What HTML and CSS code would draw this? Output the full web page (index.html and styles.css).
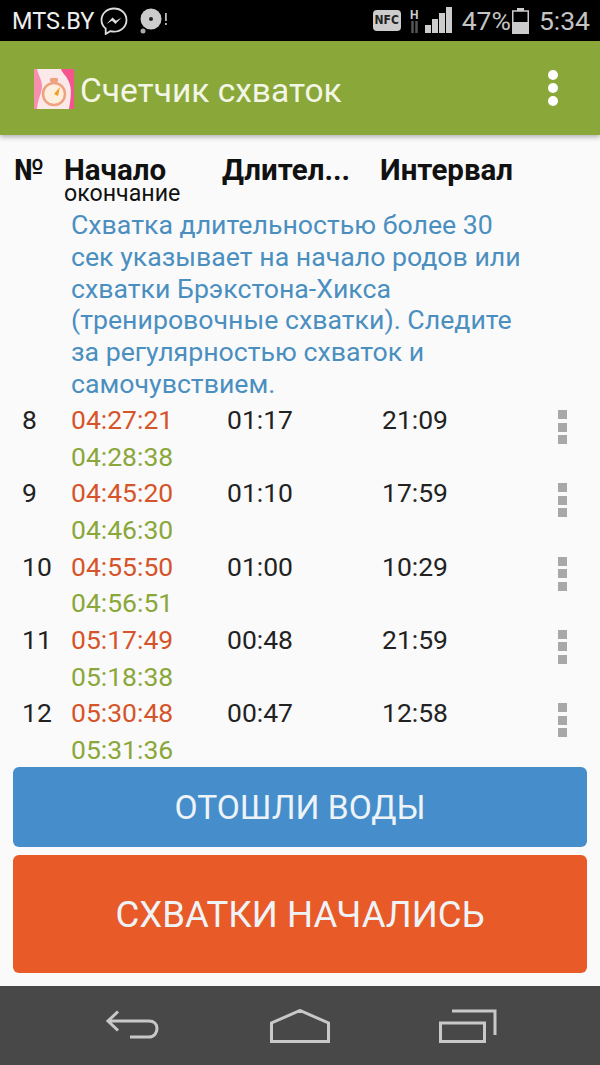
FILE: index.html
```html
<!DOCTYPE html>
<html lang="ru">

<head>
    <meta charset="UTF-8">
    <meta name="viewport" content="width=device-width, initial-scale=1.0">
    <title>Счетчик схваток</title>
    <link rel="stylesheet" href="styles.css">
</head>

<body>
    <div class="statusbar">
        <span class="carrier">MTS.BY</span>
        <svg class="ic-msg" width="28" height="28" viewBox="0 0 28 28">
            <path d="M14 1.500C7 1.500 1.500 6.500 1.500 13c0 3.500 1.600 6.500 4.200 8.600V27l4.500-2.800c1.200.3 2.500.5 3.800.5 7 0 12.500-5 12.500-11.700S21 1.500 14 1.500z" fill="none" stroke="#ddd" stroke-width="1.800" />
            <path d="M6.500 17l6-6.500 3.500 3.300 5.500-3.300-6 6.500-3.500-3.300z" fill="#ddd" />
        </svg>
        <svg class="ic-disc" width="28" height="28" viewBox="0 0 28 28">
            <circle cx="11" cy="12" r="10.500" fill="#ccc" />
            <circle cx="11" cy="12" r="2" fill="#222" />
            <circle cx="3" cy="24" r="2.500" fill="#aaa" />
            <rect x="25" y="6" width="1.800" height="8" fill="#bbb" />
            <rect x="25" y="16" width="1.800" height="2" fill="#bbb" />
        </svg>
        <span class="status-right">
            <span class="nfc">NFC</span>
            <span class="net">
                <span class="net-h">H</span>
                <svg width="9" height="12" viewBox="0 0 9 12">
                    <path d="M2.500 0v12M6.500 0v12" stroke="#555" stroke-width="2.500" />
                </svg>
            </span>
            <svg class="ic-signal" width="27" height="27" viewBox="0 0 27 27">
                <rect x="0" y="18" width="6" height="8" fill="#ccc" />
                <rect x="7" y="12" width="6" height="14" fill="#ccc" />
                <rect x="14" y="6" width="6" height="20" fill="#ccc" />
                <rect x="21" y="0" width="6" height="26" fill="#ccc" />
            </svg>
            <span class="battery-text">47%</span>
            <svg class="ic-battery" width="17" height="26" viewBox="0 0 17 26">
                <rect x="5" y="0" width="7" height="3" fill="#ccc" />
                <rect x=".75" y="3" width="15.500" height="22" fill="none" stroke="#ccc" stroke-width="1.500" />
                <rect x="0" y="14" width="17" height="12" fill="#ccc" />
            </svg>
            <span class="clock">5:34</span>
        </span>
    </div>

    <div class="actionbar">
        <svg class="app-icon" width="40" height="40" viewBox="0 0 40 40">
            <rect width="40" height="40" fill="#fbe9ea" />
            <path d="M0 0h3c1 6 5 10 5 17s-4 12-5 23H0z" fill="#f78fae" />
            <path d="M40 0H27c1 4 5 6 8 13s2 15 0 27h5z" fill="#f5558c" />
            <circle cx="20" cy="25" r="11" fill="#fdeede" stroke="#eea27f" stroke-width="2.500" />
            <rect x="16" y="9" width="8" height="4" rx="1" fill="#eea27f" />
            <path d="M20 25l6-7-2 9z" fill="#f0a020" />
        </svg>
        <span class="app-title">Счетчик схваток</span>
        <span class="overflow">
            <i></i><i></i><i></i>
        </span>
    </div>

    <div class="content">
        <div class="table-head row-grid">
            <div class="th th-num">№</div>
            <div class="th-start">
                <div class="th">Начало</div>
                <div class="th-sub">окончание</div>
            </div>
            <div class="th th-dur">Длител...</div>
            <div class="th th-int">Интервал</div>
        </div>

        <p class="note">Схватка длительностью более 30 сек указывает на начало родов или схватки Брэкстона-Хикса (тренировочные схватки). Следите за регулярностью схваток и самочувствием.</p>

        <div class="rows">
            <div class="row row-grid">
                <div class="num">8</div>
                <div class="times"><div class="t-start">04:27:21</div><div class="t-end">04:28:38</div></div>
                <div class="dur">01:17</div>
                <div class="int">21:09</div>
                <div class="dots"><i></i><i></i><i></i></div>
            </div>
            <div class="row row-grid">
                <div class="num">9</div>
                <div class="times"><div class="t-start">04:45:20</div><div class="t-end">04:46:30</div></div>
                <div class="dur">01:10</div>
                <div class="int">17:59</div>
                <div class="dots"><i></i><i></i><i></i></div>
            </div>
            <div class="row row-grid">
                <div class="num">10</div>
                <div class="times"><div class="t-start">04:55:50</div><div class="t-end">04:56:51</div></div>
                <div class="dur">01:00</div>
                <div class="int">10:29</div>
                <div class="dots"><i></i><i></i><i></i></div>
            </div>
            <div class="row row-grid">
                <div class="num">11</div>
                <div class="times"><div class="t-start">05:17:49</div><div class="t-end">05:18:38</div></div>
                <div class="dur">00:48</div>
                <div class="int">21:59</div>
                <div class="dots"><i></i><i></i><i></i></div>
            </div>
            <div class="row row-grid">
                <div class="num">12</div>
                <div class="times"><div class="t-start">05:30:48</div><div class="t-end">05:31:36</div></div>
                <div class="dur">00:47</div>
                <div class="int">12:58</div>
                <div class="dots"><i></i><i></i><i></i></div>
            </div>
        </div>

        <div class="buttons">
            <button class="btn btn-water">ОТОШЛИ ВОДЫ</button>
            <button class="btn btn-start">СХВАТКИ НАЧАЛИСЬ</button>
        </div>
    </div>

    <div class="navbar">
        <svg width="56" height="32" viewBox="0 0 56 32">
            <path d="M13 1.500L3 11l10 9.500M3 11h41c5 0 8 3 8 7.500S49 27 44 27H25" fill="none" stroke="#c8c8c8" stroke-width="3" />
        </svg>
        <svg width="60" height="34" viewBox="0 0 60 34">
            <path d="M1.500 32.500V14L30 1.500 58.500 14v18.500z" fill="none" stroke="#c8c8c8" stroke-width="3" />
        </svg>
        <svg width="58" height="34" viewBox="0 0 58 34">
            <path d="M1.500 14h44v18.500h-44z" fill="none" stroke="#c8c8c8" stroke-width="3" />
            <path d="M13 2h43v24" fill="none" stroke="#c8c8c8" stroke-width="3" />
        </svg>
    </div>
</body>

</html>
```

FILE: styles.css
```css
* {
    box-sizing: border-box;
}

body {
    margin: 0;
    width: 600px;
    height: 1065px;
    overflow: hidden;
    font-family: Roboto, "Noto Sans", sans-serif;
    background-color: #fafafa;
    display: flex;
    flex-direction: column;
}

.statusbar {
    height: 41px;
    background-color: #000;
    color: #d8d8d8;
    display: flex;
    align-items: center;
    padding: 0 10px 0 12px;
    font-size: 23.500px;
}

.carrier {
    color: #eee;
}

.ic-msg {
    margin-left: 6px;
}

.ic-disc {
    margin-left: 12px;
}

.status-right {
    margin-left: auto;
    display: flex;
    align-items: center;
    color: #c4c4c4;
    font-size: 26.500px;
}

.nfc {
    width: 28px;
    height: 21px;
    line-height: 21px;
    border-radius: 4px;
    background-color: #ccc;
    color: #222;
    font-size: 12px;
    font-weight: bold;
    text-align: center;
    font-family: "DejaVu Sans Condensed", "DejaVu Sans", sans-serif;
}

.net {
    width: 9px;
    margin-left: 9px;
    display: flex;
    flex-direction: column;
    align-items: center;
    font-size: 12px;
    font-weight: bold;
    line-height: 12px;
}

.net-h {
    color: #ccc;
}

.ic-signal {
    margin-left: 6px;
}

.battery-text {
    margin-left: 10px;
}

.ic-battery {
    margin-left: 1px;
}

.clock {
    margin-left: 10px;
}

.actionbar {
    height: 94px;
    background-color: #8aa73a;
    display: flex;
    align-items: center;
    padding-left: 34px;
    box-shadow: 0 2px 5px rgba(0, 0, 0, 0.3);
    position: relative;
}

.app-icon {
    margin-top: 2px;
}

.app-title {
    margin-left: 6px;
    margin-top: 4px;
    color: #f3f6e6;
    font-size: 33.500px;
}

.overflow {
    margin-left: auto;
    margin-right: 42px;
    display: flex;
    flex-direction: column;
    gap: 3px;
}

.overflow i {
    width: 10px;
    height: 10px;
    border-radius: 50%;
    background-color: #fff;
}

.content {
    flex: 1;
    display: flex;
    flex-direction: column;
    min-height: 0;
}

.row-grid {
    display: grid;
    grid-template-columns: 50px 158px 158px 1fr;
    padding-left: 14px;
}

.table-head {
    height: 75px;
    padding-top: 21px;
    color: #111;
}

.th {
    font-size: 29.500px;
    font-weight: bold;
    line-height: 29px;
}

.th-sub {
    font-size: 23.200px;
    line-height: 16px;
}

.note {
    margin: 0;
    padding: 0 68px 0 71px;
    color: #4b8fc0;
    font-size: 26.700px;
    line-height: 31.800px;
    height: 192px;
}

.rows {
    height: 365px;
    overflow: hidden;
    flex-shrink: 0;
}

.row {
    height: 73.300px;
    padding-left: 22px;
    grid-template-columns: 49px 156px 155px 176px 1fr;
    font-size: 26.500px;
    line-height: 36.650px;
    color: #222;
}

.t-start {
    color: #d6542a;
}

.t-end {
    color: #8aa73a;
}

.dots {
    display: flex;
    flex-direction: column;
    gap: 3.500px;
    padding-top: 8px;
}

.dots i {
    width: 9px;
    height: 9px;
    background-color: #a8a8a8;
}

.buttons {
    padding: 0 13px;
    display: flex;
    flex-direction: column;
    gap: 8px;
}

.btn {
    border: none;
    border-radius: 6px;
    color: #eef3f7;
    font-family: inherit;
}

.btn-water {
    height: 80px;
    background-color: #458ecb;
    font-size: 33.600px;
}

.btn-start {
    height: 118px;
    background-color: #e85a28;
    font-size: 36.600px;
}

.navbar {
    height: 79px;
    background-color: #484848;
    display: flex;
    align-items: center;
    padding-left: 105px;
    gap: 109px;
}
```
